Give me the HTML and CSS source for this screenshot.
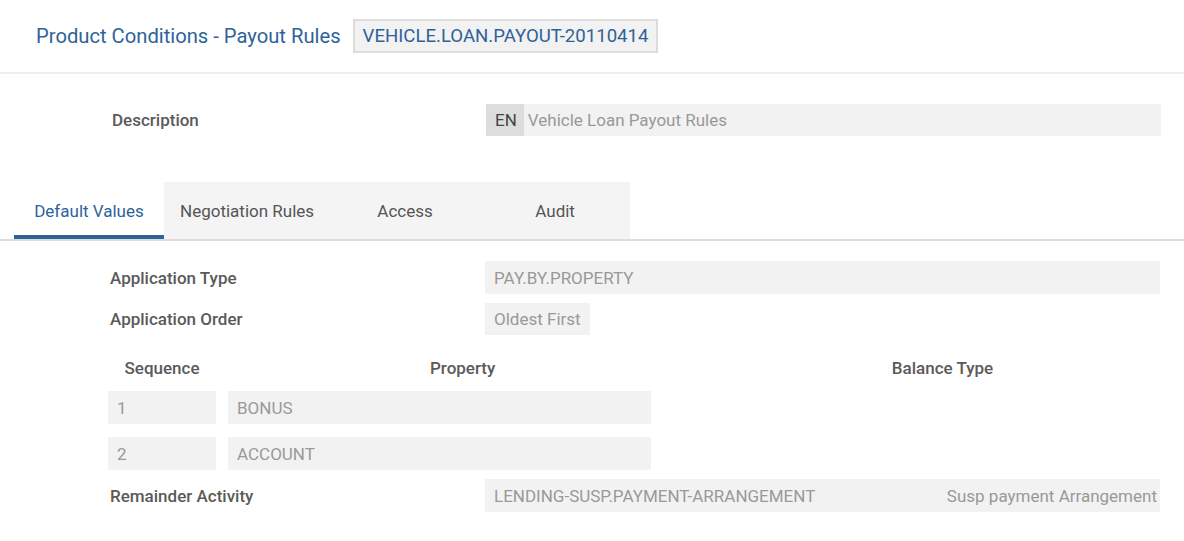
FILE: index.html
```html
<!DOCTYPE html>
<html lang="en">
<head>
    <meta charset="UTF-8">
    <title>Product Conditions - Payout Rules</title>
    <link rel="stylesheet" href="styles.css">
</head>
<body>
    <div class="page-header">
        <h1 class="page-title">Product Conditions - Payout Rules</h1>
        <span class="record-id">VEHICLE.LOAN.PAYOUT-20110414</span>
    </div>

    <div class="desc-row">
        <span class="label">Description</span>
        <div class="field lang-field">
            <span class="lang">EN</span>
            <span class="lang-value">Vehicle Loan Payout Rules</span>
        </div>
    </div>

    <div class="tabs">
        <div class="tab active">Default Values</div>
        <div class="tab">Negotiation Rules</div>
        <div class="tab">Access</div>
        <div class="tab">Audit</div>
    </div>

    <div class="tab-body">
        <div class="form-row">
            <span class="label">Application Type</span>
            <div class="field">PAY.BY.PROPERTY</div>
        </div>
        <div class="form-row">
            <span class="label">Application Order</span>
            <div class="field short">Oldest First</div>
        </div>

        <div class="seq-table">
            <div class="col-head">Sequence</div>
            <div class="col-head prop-head">Property</div>
            <div class="col-head bal-head">Balance Type</div>

            <div class="field">1</div>
            <div class="field">BONUS</div>
            <div></div>

            <div class="field">2</div>
            <div class="field">ACCOUNT</div>
            <div></div>
        </div>

        <div class="form-row">
            <span class="label">Remainder Activity</span>
            <div class="field split">
                <span>LENDING-SUSP.PAYMENT-ARRANGEMENT</span>
                <span>Susp payment Arrangement</span>
            </div>
        </div>
    </div>
</body>
</html>
```

FILE: styles.css
```css
body{
    margin: 0;
    padding: 0;
    background-color: #ffffff;
    font-family: Roboto, "Liberation Sans", Arial, sans-serif;
    font-size: 17px;
    color: #555555;
}

.page-header{
    display: flex;
    align-items: center;
    gap: 12px;
    height: 72px;
    padding: 0 36px;
    border-bottom: 2px solid #eeeeee;
}

.page-title{
    margin: 0;
    font-size: 20.2px;
    font-weight: 400;
    color: #2e6399;
}

.record-id{
    display: flex;
    align-items: center;
    height: 30px;
    padding: 0 8px;
    background-color: #f2f2f2;
    border: 2px solid #dddddd;
    font-size: 18.6px;
    color: #2e6399;
}

.label{
    font-weight: 500;
    color: #5a5a5a;
}

.field{
    display: flex;
    align-items: center;
    height: 33px;
    padding: 0 9px;
    background-color: #f2f2f2;
    color: #999999;
    box-sizing: border-box;
}

.desc-row{
    display: grid;
    grid-template-columns: 374px 1fr;
    align-items: center;
    margin: 30px 23px 0 112px;
}

.lang-field{
    padding: 0;
    height: 32px;
}

.lang{
    display: flex;
    align-items: center;
    height: 100%;
    padding: 0 7px 0 9px;
    background-color: #dddddd;
    color: #444444;
}

.lang-value{
    padding-left: 4px;
}

.tabs{
    display: flex;
    margin: 46px 0 0 14px;
    position: relative;
}

.tabs::after{
    content: "";
    position: absolute;
    left: -14px;
    right: 0;
    bottom: -2px;
    height: 2px;
    background-color: #dddddd;
}

.tab{
    min-width: 150px;
    height: 57px;
    padding: 0 16px;
    box-sizing: border-box;
    display: flex;
    align-items: center;
    justify-content: center;
    background-color: #f4f4f4;
    color: #555555;
}

.tab.active{
    background-color: #ffffff;
    color: #2e6399;
    border-bottom: 4px solid #2e6399;
    padding-top: 4px;
}

.tab-body{
    display: flex;
    flex-direction: column;
    gap: 9px;
    padding: 22px 24px 0 110px;
}

.form-row{
    display: grid;
    grid-template-columns: 375px 1fr;
    align-items: center;
}

.field.short{
    justify-self: start;
    height: 32px;
}

.field.split{
    justify-content: space-between;
    padding-right: 3px;
}

.seq-table{
    display: grid;
    grid-template-columns: 108px 423px 1fr;
    column-gap: 12px;
    row-gap: 13px;
    margin: 14px 0 0 -2px;
}

.col-head{
    text-align: center;
    font-weight: 500;
    color: #5a5a5a;
}

.prop-head{
    text-align: left;
    padding-left: 202px;
}

.bal-head{
    padding-left: 62px;
}
```
